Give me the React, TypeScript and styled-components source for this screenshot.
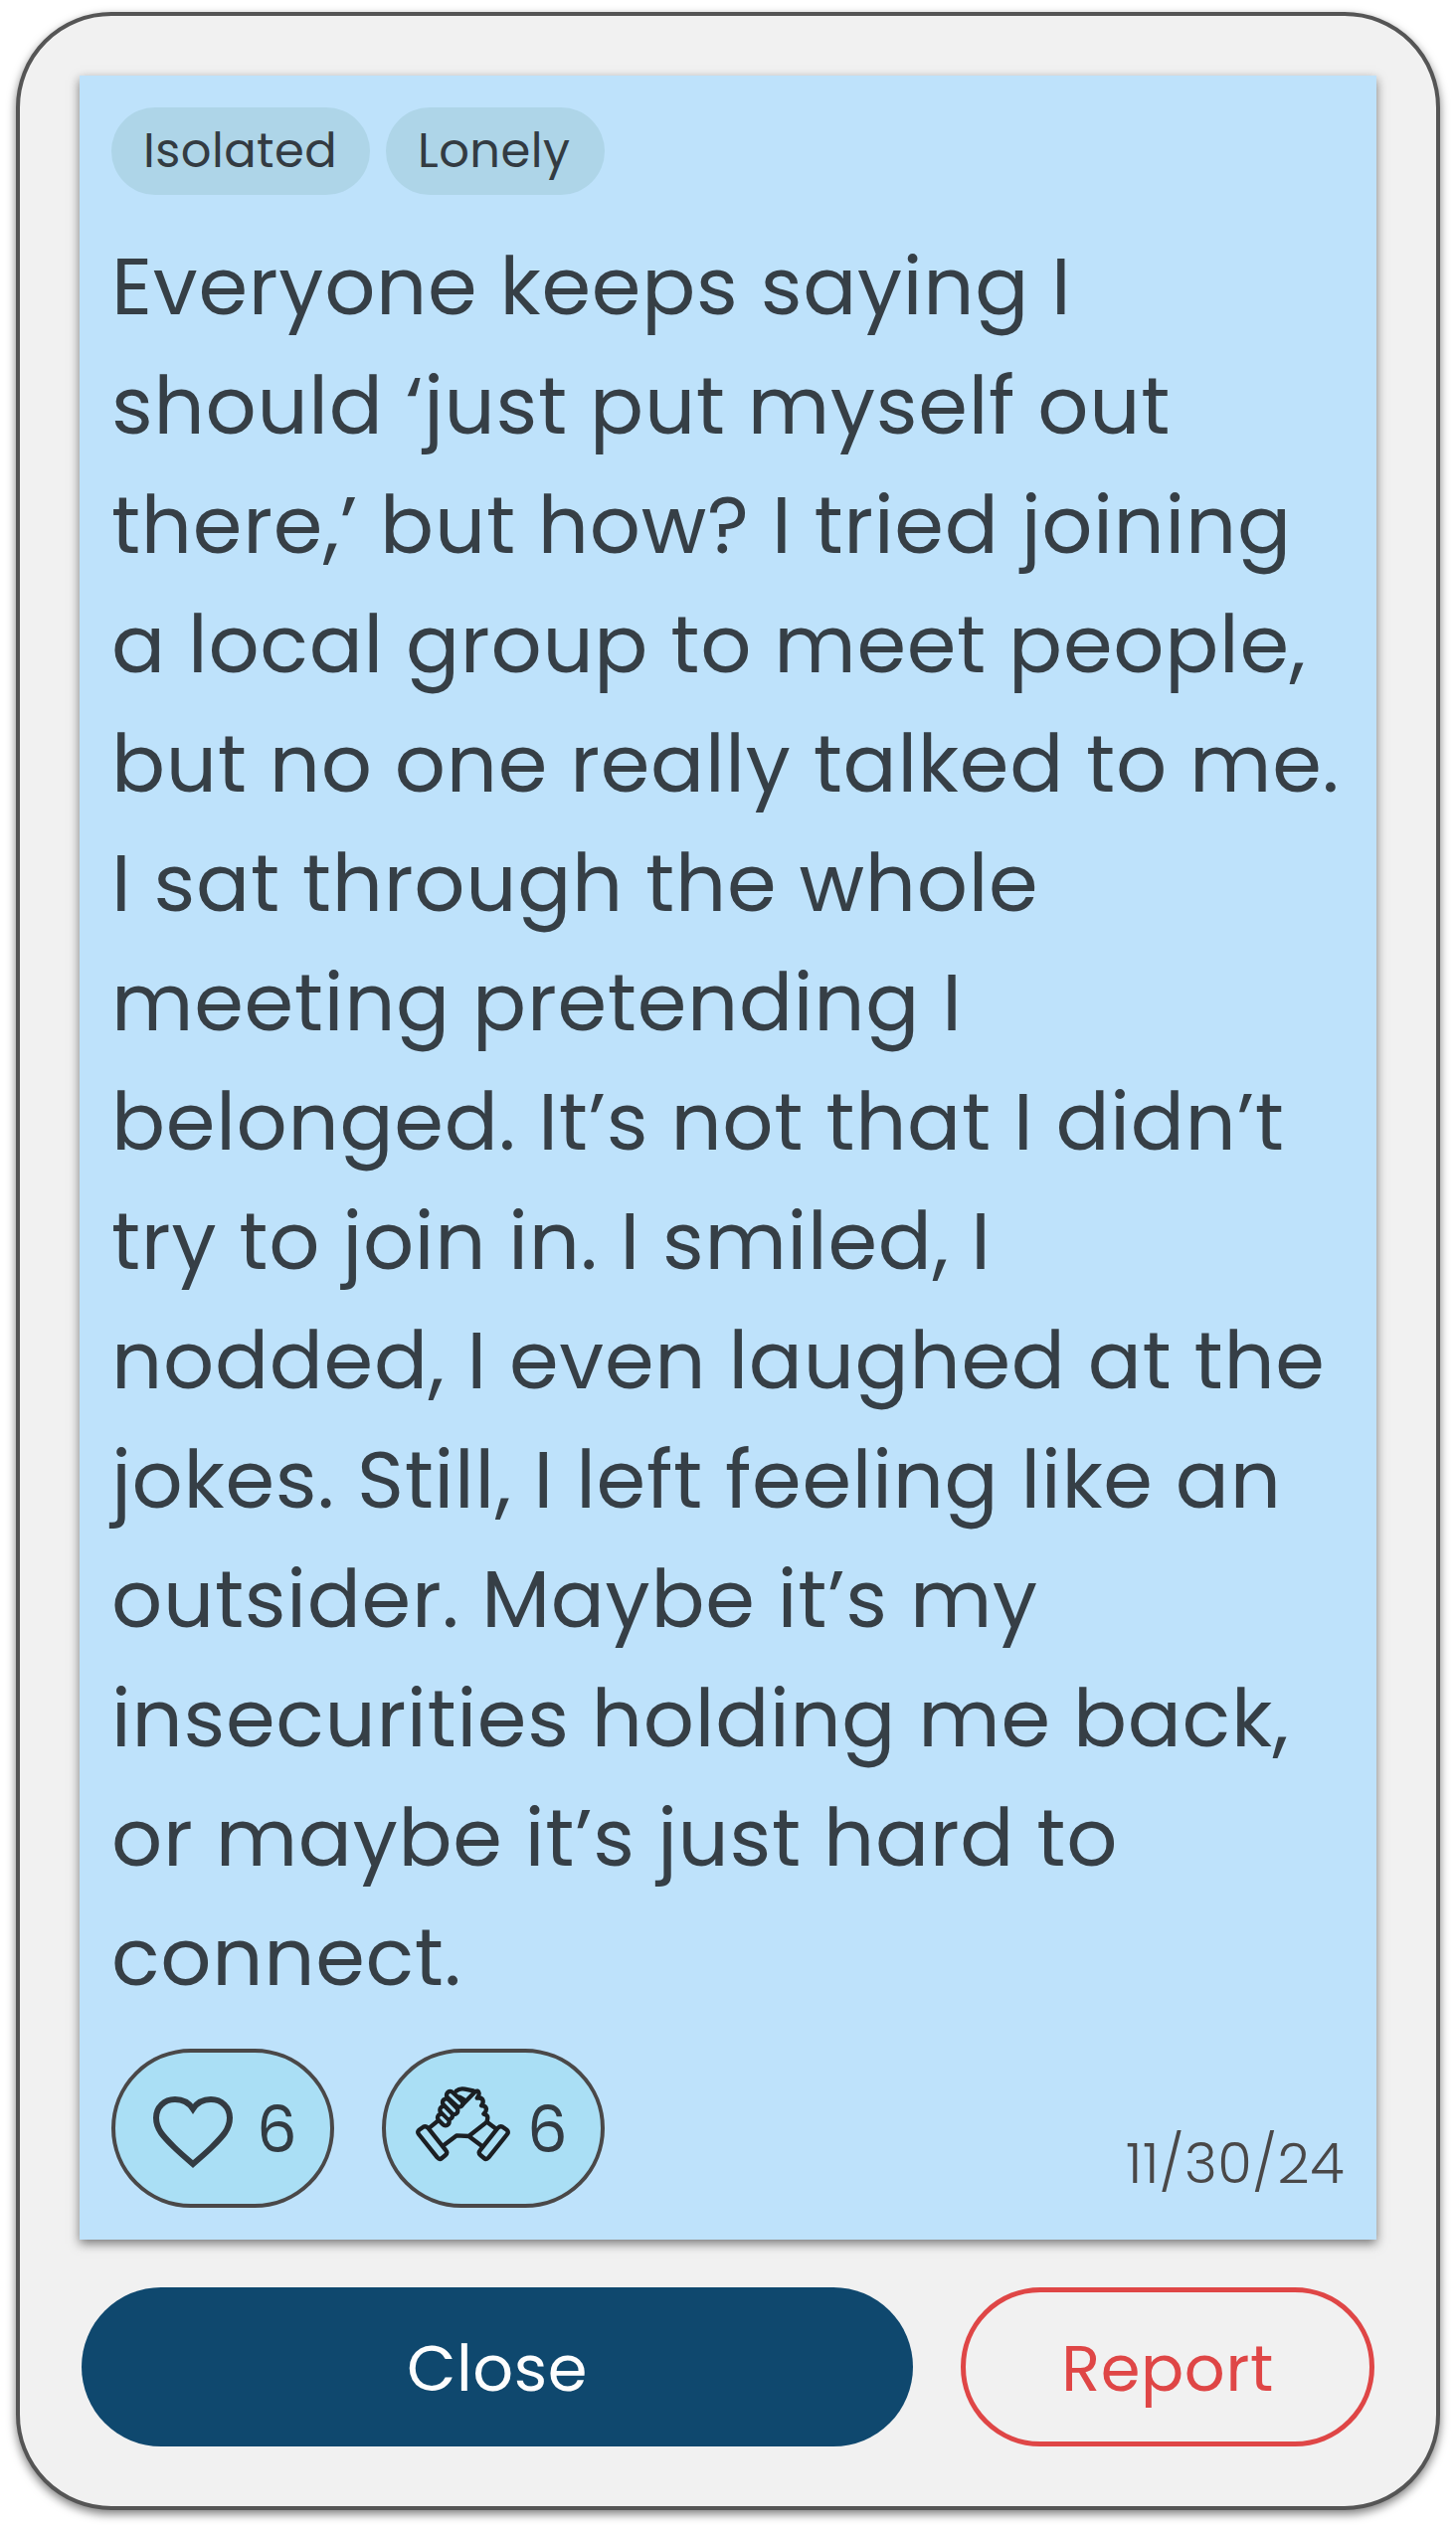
import React from "react";
import styled, { createGlobalStyle } from "styled-components";

const GlobalStyle = createGlobalStyle`
  *, *::before, *::after { box-sizing: border-box; letter-spacing: 0.0094em; }
  body { margin: 0; background: #ffffff; }
`;

const Page = styled.main`
  width: 1464px;
  height: 2544px;
  padding: 12px 16px 20px;
  overflow: hidden;
  font-family: Poppins, Inter, "Open Sans", sans-serif;
  color: #363f46;
`;

const Panel = styled.section`
  display: flex;
  flex-direction: column;
  gap: 48px;
  height: 100%;
  padding: 60px;
  border: 4px solid #555555;
  border-radius: 96px;
  background: #f1f1f1;
  box-shadow: 0 4px 10px rgba(0, 0, 0, 0.5);
`;

const Note = styled.article`
  display: flex;
  flex-direction: column;
  gap: 32px;
  height: 2176px;
  padding: 32px;
  background: #bee2fb;
  box-shadow: 0 4px 10px rgba(0, 0, 0, 0.5);
`;

const Tags = styled.div`
  display: flex;
  gap: 16px;
`;

const Tag = styled.span<{ $width: number }>`
  width: ${(p) => p.$width}px;
  padding: 8px 0 8px 32px;
  border-radius: 44px;
  background: #aed5e8;
  color: #333b42;
  font-size: 48px;
  line-height: 72px;
`;

const Message = styled.p`
  flex: none;
  margin: 0;
  font-size: 80px;
  line-height: 120px;
  white-space: nowrap;
`;

const Line = styled.span`
  display: block;
`;

const Footer = styled.footer`
  display: flex;
  align-items: flex-end;
  gap: 48px;
`;

const Reaction = styled.button`
  display: flex;
  align-items: center;
  gap: 16px;
  width: 224px;
  height: 160px;
  padding: 0 0 0 30px;
  border: 4px solid #4a4848;
  border-radius: 80px;
  background: #aadff5;
  color: #333b42;
  font-family: inherit;
  font-size: 64px;
`;

const Count = styled.span`
  padding-top: 2px;
`;

const Icon = styled.svg`
  flex: none;
  width: 96px;
  height: 96px;
  fill: none;
`;

const DateText = styled.time`
  margin-left: auto;
  color: #4a4848;
  font-size: 56px;
  font-weight: 300;
  line-height: 88px;
`;

const Actions = styled.div`
  display: flex;
  gap: 48px;
  padding: 0 2px;
`;

const Action = styled.button<{ $danger?: boolean }>`
  display: flex;
  align-items: center;
  justify-content: center;
  flex: ${(p) => (p.$danger ? "0 0 416px" : "1")};
  height: 160px;
  padding: 3px 0 0;
  border: ${(p) => (p.$danger ? "5px solid #df4646" : "none")};
  border-radius: 80px;
  background: ${(p) => (p.$danger ? "transparent" : "#0f486e")};
  color: ${(p) => (p.$danger ? "#df4646" : "#fdfdfd")};
  font-family: inherit;
  font-size: 64px;
`;

const tags = [
  { label: "Isolated", width: 260 },
  { label: "Lonely", width: 220 },
];

const lines = [
  "Everyone keeps saying I",
  "should ‘just put myself out",
  "there,’ but how? I tried joining",
  "a local group to meet people,",
  "but no one really talked to me.",
  "I sat through the whole",
  "meeting pretending I",
  "belonged. It’s not that I didn’t",
  "try to join in. I smiled, I",
  "nodded, I even laughed at the",
  "jokes. Still, I left feeling like an",
  "outsider. Maybe it’s my",
  "insecurities holding me back,",
  "or maybe it’s just hard to",
  "connect.",
];

const fingers = [
  "M104 44L131 69",
  "M92 66L116 91",
  "M84 89L100 106",
  "M77 112L90 125",
];

function Heart() {
  return (
    <Icon viewBox="0 0 96 96" stroke="#333b42" strokeWidth="6">
      <path d="M48 28.5C44 22.5 37.5 19 30 19C19 19 11 27 11 37.5C11 49 18 56 29 67C34 72 41 78 48 84C55 78 62 72 67 67C78 56 85 49 85 37.5C85 27 77 19 66 19C58.5 19 52 22.5 48 28.5Z" />
    </Icon>
  );
}

function ClaspedHands() {
  const cuff =
    "M10 149Q4 155 9 162L65 232Q72 240 79 234L90 225Q97 218 91 211L37 143Q30 136 23 140Z";
  return (
    <Icon
      viewBox="0 0 288 288"
      stroke="#1b1f23"
      strokeWidth="13"
      strokeLinecap="round"
      strokeLinejoin="round"
    >
      <path d={cuff} />
      <path d={cuff} transform="translate(285 0) scale(-1 1)" />
      <path d="M41 143L64 124M84 196L124 166L160 168L215 125L243 146M160 168L200 198" />
      <path d="M122 32Q132 23 148 26L174 31M132 50L146 58M142 72L178 35Q189 27 191 39Q191 47 185 53Q200 50 203 61Q204 70 198 76Q212 76 213 86Q213 94 205 101Q217 104 217 112L215 125" />
      {fingers.map((d) => (
        <path key={d} d={d} strokeWidth="35" />
      ))}
      {fingers.map((d) => (
        <path key={d} d={d} stroke="#aadff5" strokeWidth="9" />
      ))}
    </Icon>
  );
}

export default function App() {
  return (
    <Page>
      <GlobalStyle />
      <Panel>
        <Note>
          <Tags>
            {tags.map((t) => (
              <Tag key={t.label} $width={t.width}>
                {t.label}
              </Tag>
            ))}
          </Tags>
          <Message>
            {lines.map((text) => (
              <Line key={text}>{text}</Line>
            ))}
          </Message>
          <Footer>
            <Reaction>
              <Heart />
              <Count>6</Count>
            </Reaction>
            <Reaction>
              <ClaspedHands />
              <Count>6</Count>
            </Reaction>
            <DateText>11/30/24</DateText>
          </Footer>
        </Note>
        <Actions>
          <Action>Close</Action>
          <Action $danger>Report</Action>
        </Actions>
      </Panel>
    </Page>
  );
}
